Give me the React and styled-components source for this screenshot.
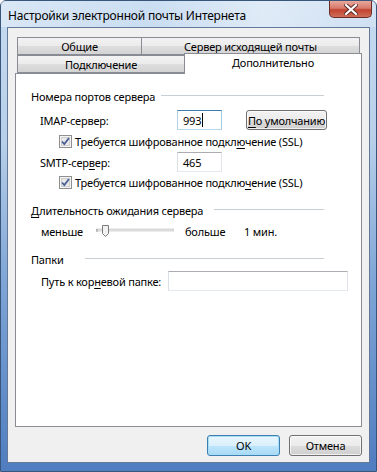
import React from 'react';
import styled, { createGlobalStyle } from 'styled-components';

const Global = createGlobalStyle`
  html, body { margin: 0; padding: 0; background: #fff; }
  body { font-family: "Noto Sans", "Open Sans", sans-serif; font-size: 11px; letter-spacing: -0.2px; color: #000; }
`;

const Window = styled.div`
  width: 377px;
  height: 472px;
  box-sizing: border-box;
  border: 1px solid #38557a;
  border-radius: 6px 6px 0 0;
  background: linear-gradient(180deg, #c6dbf1 0%, #b7cfe9 30%, #7ea5d6 60%, #4f7dc0 100%);
  display: flex;
  flex-direction: column;
`;

const TitleBar = styled.div`
  height: 26px;
  display: flex;
  align-items: flex-start;
  padding-left: 7px;
  background: linear-gradient(90deg, rgba(255,255,255,0.35), rgba(255,255,255,0.1) 40%, rgba(255,255,255,0.45) 70%, rgba(255,255,255,0.2));
`;

const Title = styled.span`
  margin-top: 6px;
  font-size: 12px;
  letter-spacing: -0.2px;
  white-space: nowrap;
`;

const CloseButton = styled.div`
  margin-left: auto;
  margin-right: 4px;
  width: 43px;
  height: 17px;
  box-sizing: border-box;
  border: 1px solid #6b2c28;
  border-top: none;
  border-radius: 0 0 5px 5px;
  background: linear-gradient(180deg, #e8a89c 0%, #d67a6c 45%, #c2432f 55%, #cf6f5b 100%);
  display: flex;
  align-items: center;
  justify-content: center;
`;

const Client = styled.div`
  flex: 1;
  margin: 0 6px 8px;
  border: 1px solid #64799a;
  background: #f0f0f0;
  display: flex;
  flex-direction: column;
  padding: 9px 7px 0 7px;
`;

const TabStrip = styled.div`
  display: flex;
  flex-direction: column;
  height: 36px;
`;

const TabRow = styled.div`
  display: flex;
  padding: 0 2px;
  height: ${p => p.$h}px;
  align-items: flex-end;
`;

const Tab = styled.div`
  box-sizing: border-box;
  width: ${p => p.$w ? `${p.$w}px` : 'auto'};
  flex: ${p => p.$w ? 'none' : 1};
  height: ${p => p.$active ? 21 : 18}px;
  margin: ${p => p.$active ? '0 -2px -1px 0' : '0'};
  border: 1px solid #898c95;
  border-bottom: ${p => p.$active ? 'none' : '1px solid #898c95'};
  border-right: ${p => p.$last || p.$active ? '1px solid #898c95' : 'none'};
  background: ${p => p.$active ? '#fff' : 'linear-gradient(180deg, #f3f3f3 0%, #ebebeb 50%, #dedede 51%, #d3d3d3 100%)'};
  display: flex;
  align-items: center;
  justify-content: center;
  padding-bottom: ${p => p.$active ? 4 : 0}px;
  white-space: nowrap;
  position: relative;
  z-index: ${p => p.$active ? 2 : 1};
`;

const Panel = styled.div`
  height: 354px;
  box-sizing: border-box;
  border: 1px solid #898c95;
  background: #fff;
  padding: 14px 0 0 15px;
  display: flex;
  flex-direction: column;
`;

const GroupHead = styled.div`
  display: flex;
  align-items: center;
  height: 16px;
  white-space: nowrap;
  margin: ${p => p.$mt || 0}px 0 0 0;
  &::after {
    content: '';
    width: ${p => p.$line}px;
    margin-left: auto;
    margin-right: 37px;
    border-top: 1px solid #c8d0d6;
    border-bottom: 1px solid #fff;
    height: 0;
  }
`;

const Row = styled.div`
  display: flex;
  align-items: center;
  height: ${p => p.$h || 20}px;
  margin-top: ${p => p.$mt || 0}px;
  padding-left: ${p => p.$pl || 0}px;
  white-space: nowrap;
`;

const Label = styled.span`
  width: ${p => p.$w ? `${p.$w}px` : 'auto'};
  margin-left: ${p => p.$ml || 0}px;
  flex: none;
`;

const Input = styled.div`
  box-sizing: border-box;
  width: ${p => p.$w}px;
  height: 20px;
  border: 1px solid;
  border-color: ${p => p.$focus ? '#3d7bad #a4c9e3 #b7d9ed #b5cfe7' : '#abadb3 #e2e3ea #e3e9ef #dbdfe6'};
  background: #fff;
  display: flex;
  align-items: center;
  padding-left: 5px;
  flex: none;
`;

const Caret = styled.span`
  display: inline-block;
  width: 1px;
  height: 14px;
  background: #000;
  margin-left: 1px;
`;

const Button = styled.div`
  box-sizing: border-box;
  width: ${p => p.$w}px;
  height: ${p => p.$h || 20}px;
  margin-left: ${p => p.$ml || 0}px;
  border: 1px solid ${p => p.$default ? '#3c7fb1' : '#707070'};
  border-radius: 3px;
  background: ${p => p.$default
    ? 'linear-gradient(180deg, #eaf6fd 0%, #d9f0fc 50%, #bee6fd 51%, #a7d9f5 100%)'
    : 'linear-gradient(180deg, #f2f2f2 0%, #ebebeb 50%, #dddddd 51%, #cfcfcf 100%)'};
  box-shadow: inset 0 0 0 1px ${p => p.$default ? '#a9dcf5' : 'rgba(255,255,255,0.7)'};
  display: flex;
  align-items: center;
  justify-content: center;
  white-space: nowrap;
  flex: none;
`;

const U = styled.span`
  text-decoration: underline;
  text-underline-offset: 2px;
`;

const Check = styled.label`
  display: flex;
  align-items: center;
  gap: 3px;
`;

const Footer = styled.div`
  display: flex;
  justify-content: flex-end;
  gap: 9px;
  margin-top: 8px;
`;

const CheckBox = () => (
  <svg width="13" height="13" viewBox="0 0 13 13">
    <rect x="0.5" y="0.5" width="12" height="12" fill="#f4f4f4" stroke="#8f8f8f" />
    <rect x="2.5" y="2.5" width="8" height="8" fill="#e9e9e9" stroke="#cfcfcf" />
    <path d="M3 6.5 L5.3 9 L10 3" fill="none" stroke="#4a5f97" strokeWidth="1.8" />
  </svg>
);

const Slider = () => (
  <svg width="78" height="14" viewBox="0 0 78 14">
    <rect x="0" y="5" width="78" height="2" fill="#e7eaea" stroke="#b0b0b0" strokeWidth="0.5" />
    <line x1="1" y1="5" x2="1" y2="8" stroke="#999" />
    <path d="M6.5 1.5 h6 v8 l-3 3 l-3 -3 z" fill="#f1f1f1" stroke="#7b7b7b" />
  </svg>
);

const CloseX = () => (
  <svg width="14" height="11" viewBox="0 0 14 11">
    <path d="M2 1 L12 10 M12 1 L2 10" stroke="#5a2a26" strokeWidth="4" strokeLinecap="square" />
    <path d="M2 1 L12 10 M12 1 L2 10" stroke="#fff" strokeWidth="2.2" strokeLinecap="square" />
  </svg>
);

export default function App() {
  return (
    <>
      <Global />
      <Window>
        <TitleBar>
          <Title>Настройки электронной почты Интернета</Title>
          <CloseButton><CloseX /></CloseButton>
        </TitleBar>
        <Client>
          <TabStrip>
            <TabRow $h={18}>
              <Tab $w={124}>Общие</Tab>
              <Tab $last>Сервер исходящей почты</Tab>
            </TabRow>
            <TabRow $h={18}>
              <Tab $w={167}>Подключение</Tab>
              <Tab $active>Дополнительно</Tab>
            </TabRow>
          </TabStrip>
          <Panel>
            <GroupHead $line={163}>Номера портов сервера</GroupHead>
            <Row $mt={6} $pl={9}>
              <Label $w={137}>IMAP-сервер:</Label>
              <Input $w={45} $focus>993<Caret /></Input>
              <Button $w={81} $ml={24}><span><U>П</U>о умолчанию</span></Button>
            </Row>
            <Row $mt={1} $pl={28}>
              <Check><CheckBox /><span>Требуется шифрованное подкл<U>ю</U>чение (SSL)</span></Check>
            </Row>
            <Row $mt={1} $pl={9}>
              <Label $w={137}>SMTP-сер<U>в</U>ер:</Label>
              <Input $w={45}>465</Input>
            </Row>
            <Row $mt={0} $pl={28}>
              <Check><CheckBox /><span>Требуется шифрованное подклю<U>ч</U>ение (SSL)</span></Check>
            </Row>
            <GroupHead $mt={10} $line={110}><span><U>Д</U>лительность ожидания сервера</span></GroupHead>
            <Row $mt={3} $pl={10}>
              <Label $w={55}>меньше</Label>
              <Slider />
              <Label $w={59} $ml={11}>больше</Label>
              <Label>1 мин.</Label>
            </Row>
            <GroupHead $mt={10} $line={239}>Папки</GroupHead>
            <Row $mt={4} $pl={10}>
              <Label $w={127}>Путь к кор<U>н</U>евой папке:</Label>
              <Input $w={180} />
            </Row>
          </Panel>
          <Footer>
            <Button $w={73} $h={21} $default>OK</Button>
            <Button $w={73} $h={21}>Отмена</Button>
          </Footer>
        </Client>
      </Window>
    </>
  );
}
